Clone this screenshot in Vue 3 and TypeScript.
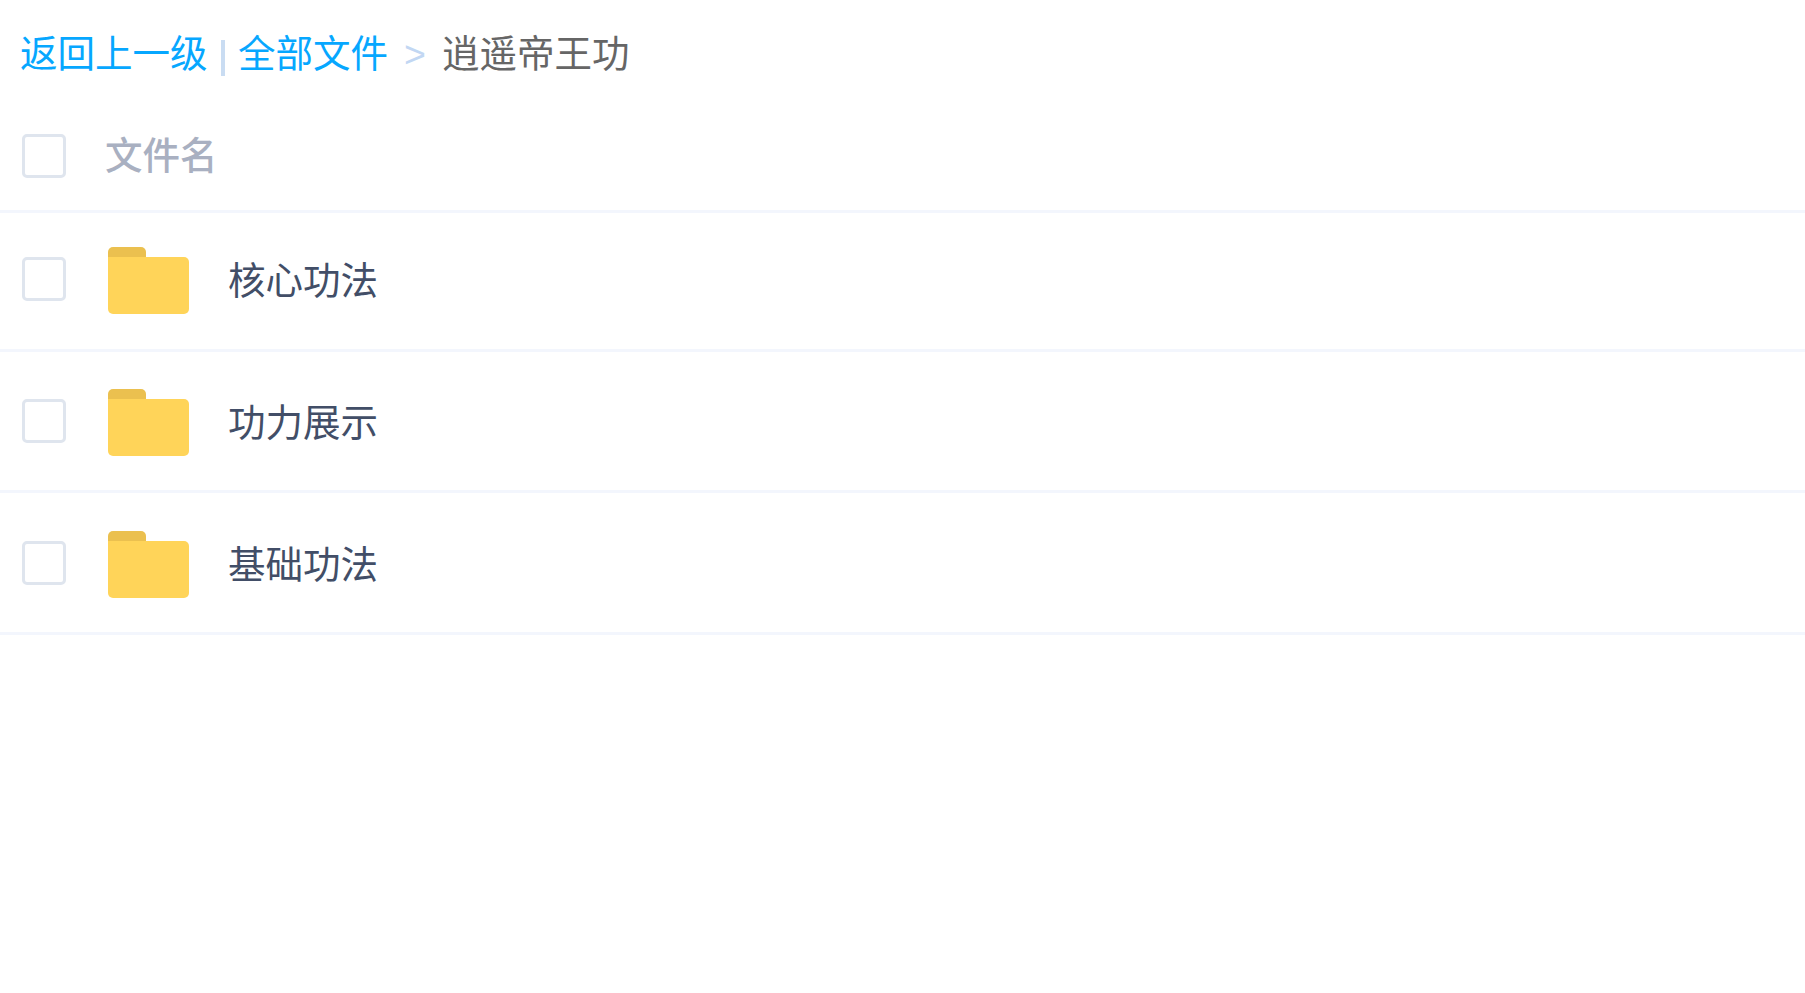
<template>
  <div class="page">
    <div class="crumbs">
      <a class="link">返回上一级</a>
      <span class="bar"></span>
      <a class="link">全部文件</a>
      <span class="sep">&gt;</span>
      <span class="current">逍遥帝王功</span>
    </div>
    <div class="row head">
      <span class="check"></span>
      <span class="head-name">文件名</span>
    </div>
    <div v-for="f in folders" :key="f" class="row item">
      <span class="check"></span>
      <svg class="folder" viewBox="0 0 81 67" aria-hidden="true">
        <path fill="#ebc04f" d="M0 5a5 5 0 0 1 5-5h28a5 5 0 0 1 5 5v7H0z" />
        <path fill="#ffd459" d="M0 10h76a5 5 0 0 1 5 5v47a5 5 0 0 1-5 5H5a5 5 0 0 1-5-5z" />
      </svg>
      <span class="name">{{ f }}</span>
    </div>
  </div>
</template>

<script setup lang="ts">
const folders: string[] = ['核心功法', '功力展示', '基础功法']
</script>

<style>
html, body {
  background: #fff;
}
</style>

<style scoped>
.page {
  font-family: "Noto Sans CJK SC", "Liberation Sans", sans-serif;
  font-size: 37.5px;
}
.crumbs {
  display: flex;
  align-items: center;
  box-sizing: border-box;
  height: 108px;
  padding: 0 0 7px 20px;
  white-space: nowrap;
}
.link {
  color: #06a7ff;
}
.bar {
  width: 4px;
  height: 36px;
  margin: 15px 13.5px 0 13px;
  background: #c9dcf2;
}
.sep {
  margin: 7px 16px 0;
  color: #c2d7f3;
  font-family: "Liberation Sans", sans-serif;
}
.current {
  color: #666;
}
.row {
  display: flex;
  align-items: center;
  padding-left: 22px;
  border-bottom: 3px solid #f3f6fd;
  box-sizing: border-box;
}
.head {
  height: 105px;
  padding-bottom: 7px;
}
.head-name {
  margin: 0 0 6px 39px;
  color: #a9b0c1;
  font-weight: 500;
}
.item {
  height: 141px;
}
.head + .item {
  height: 139px;
  padding-bottom: 4px;
}
.item:last-child {
  height: 142px;
}
.check {
  flex: none;
  width: 44px;
  height: 44px;
  box-sizing: border-box;
  border: 3px solid #dfe5ee;
  border-radius: 5px;
  background: #fff;
}
.folder {
  flex: none;
  width: 81px;
  height: 67px;
  margin: 3px 0 0 42px;
}
.name {
  margin: 0 0 3px 39px;
  color: #424e67;
}
</style>
